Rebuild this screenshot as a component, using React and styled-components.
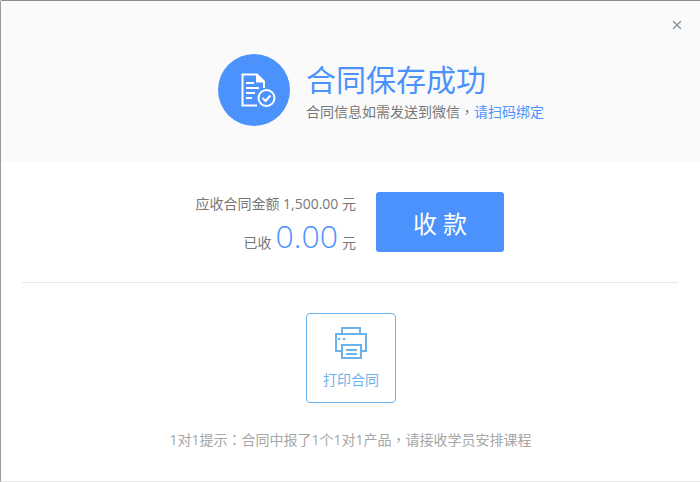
import React from 'react'
import styled, { createGlobalStyle } from 'styled-components'
import { X } from 'lucide-react'

const GlobalStyle = createGlobalStyle`
  html, body {
    margin: 0;
    padding: 0;
    background: #fff;
  }
`

const FileCheckIcon = () => (
  <svg width="36" height="36" viewBox="0 0 36 36" fill="none" stroke="#fff" strokeWidth="2">
    <path d="M24 16V9.5L17 2.5H2.5V33.5H17" />
    <path d="M17 2.5V9.5H24" fill="#fff" />
    <path d="M6 11H14M6 16H19M6 21H15M6 26H12" />
    <circle cx="26.5" cy="26" r="8" fill="#4b92fd" />
    <path d="M22.5 26L25.5 29L30.5 23.5" />
  </svg>
)

const PrinterIcon = () => (
  <svg width="32" height="32" viewBox="0 0 32 32" fill="none" stroke="#6cb3ec" strokeWidth="2">
    <path d="M7 7V1H25V7" />
    <path d="M7 24H1V7H31V24H26" />
    <rect x="7" y="18" width="19" height="13" fill="#fff" />
    <path d="M11 23H22M11 27H22" />
    <circle cx="4" cy="12" r="1.3" fill="#6cb3ec" stroke="none" />
    <circle cx="9" cy="12" r="1.3" fill="#6cb3ec" stroke="none" />
  </svg>
)

export default function App() {
  return (
    <>
      <GlobalStyle />
      <Dialog>
        <CloseButton>
          <X size={14} strokeWidth={2.6} />
        </CloseButton>
        <Banner>
          <IconCircle>
            <FileCheckIcon />
          </IconCircle>
          <BannerText>
            <Title>合同保存成功</Title>
            <Subtitle>
              合同信息如需发送到微信<Punct>，</Punct>
              <BindLink>请扫码绑定</BindLink>
            </Subtitle>
          </BannerText>
        </Banner>
        <Payment>
          <Amounts>
            <AmountRow>应收合同金额 1,500.00 元</AmountRow>
            <PaidRow>
              已收 <PaidValue>0.00</PaidValue> 元
            </PaidRow>
          </Amounts>
          <CollectButton>收 款</CollectButton>
        </Payment>
        <Divider />
        <Actions>
          <PrintButton>
            <PrinterIcon />
            <PrintLabel>打印合同</PrintLabel>
          </PrintButton>
          <Hint>
            1对1提示<Punct>：</Punct>合同中报了1个1对1产品<Punct>，</Punct>请接收学员安排课程
          </Hint>
        </Actions>
      </Dialog>
    </>
  )
}

const Dialog = styled.div`
  position: relative;
  box-sizing: border-box;
  width: 700px;
  height: 482px;
  overflow: hidden;
  background: #fff;
  border-top: 1px solid #8a8a8a;
  border-left: 1px solid #9a9a9a;
  border-bottom: 1px solid #e6e6e6;
  border-top-left-radius: 2px;
  font-family: "Open Sans", "Noto Sans CJK SC", sans-serif;
`

const CloseButton = styled.div`
  position: absolute;
  top: 17px;
  right: 16px;
  display: flex;
  color: #8b98a6;
`

const Banner = styled.div`
  display: flex;
  align-items: flex-start;
  height: 161px;
  padding: 53px 0 0 217px;
  box-sizing: border-box;
  background: #fafafa;
`

const IconCircle = styled.div`
  display: flex;
  align-items: center;
  justify-content: center;
  width: 72px;
  height: 72px;
  padding-left: 7px;
  box-sizing: border-box;
  border-radius: 50%;
  background: #4b92fd;
`

const BannerText = styled.div`
  display: flex;
  flex-direction: column;
  margin: 8px 0 0 16px;
`

const Title = styled.div`
  font-size: 30px;
  line-height: 36px;
  color: #4b92fd;
`

const Subtitle = styled.div`
  margin-top: 3px;
  font-size: 14px;
  line-height: 20px;
  color: #777;
`

const Punct = styled.span`
  font-family: "Noto Sans CJK TC", sans-serif;
`

const BindLink = styled.span`
  color: #4b92fd;
`

const Payment = styled.div`
  display: flex;
  height: 120px;
  padding: 30px 0 0 175px;
  box-sizing: border-box;
`

const Amounts = styled.div`
  display: flex;
  flex-direction: column;
  align-items: flex-end;
  width: 180px;
  color: #777;
  font-size: 14px;
`

const AmountRow = styled.div`
  margin-top: 2px;
  line-height: 20px;
`

const PaidRow = styled.div`
  display: flex;
  align-items: baseline;
  gap: 4px;
  margin-top: 2px;
  line-height: 40px;
`

const PaidValue = styled.span`
  font-size: 32px;
  font-weight: 300;
  color: #4b92fd;
`

const CollectButton = styled.div`
  display: flex;
  align-items: center;
  justify-content: center;
  width: 128px;
  height: 60px;
  margin-left: 20px;
  border-radius: 3px;
  background: #4b92fd;
  color: #fff;
  font-size: 24px;
`

const Divider = styled.div`
  height: 1px;
  margin: 0 22px 0 21px;
  background: #e8e8e8;
`

const Actions = styled.div`
  display: flex;
  flex-direction: column;
  align-items: center;
  padding-top: 30px;
`

const PrintButton = styled.div`
  display: flex;
  flex-direction: column;
  align-items: center;
  box-sizing: border-box;
  width: 90px;
  height: 90px;
  padding-top: 13px;
  border: 1px solid #6cb3ec;
  border-radius: 4px;
  margin-left: 1px;
`

const PrintLabel = styled.div`
  margin-top: 12px;
  font-size: 14px;
  line-height: 18px;
  color: #6cb3ec;
`

const Hint = styled.div`
  margin-top: 26px;
  font-size: 14px;
  line-height: 20px;
  color: #a6a6a6;
`
